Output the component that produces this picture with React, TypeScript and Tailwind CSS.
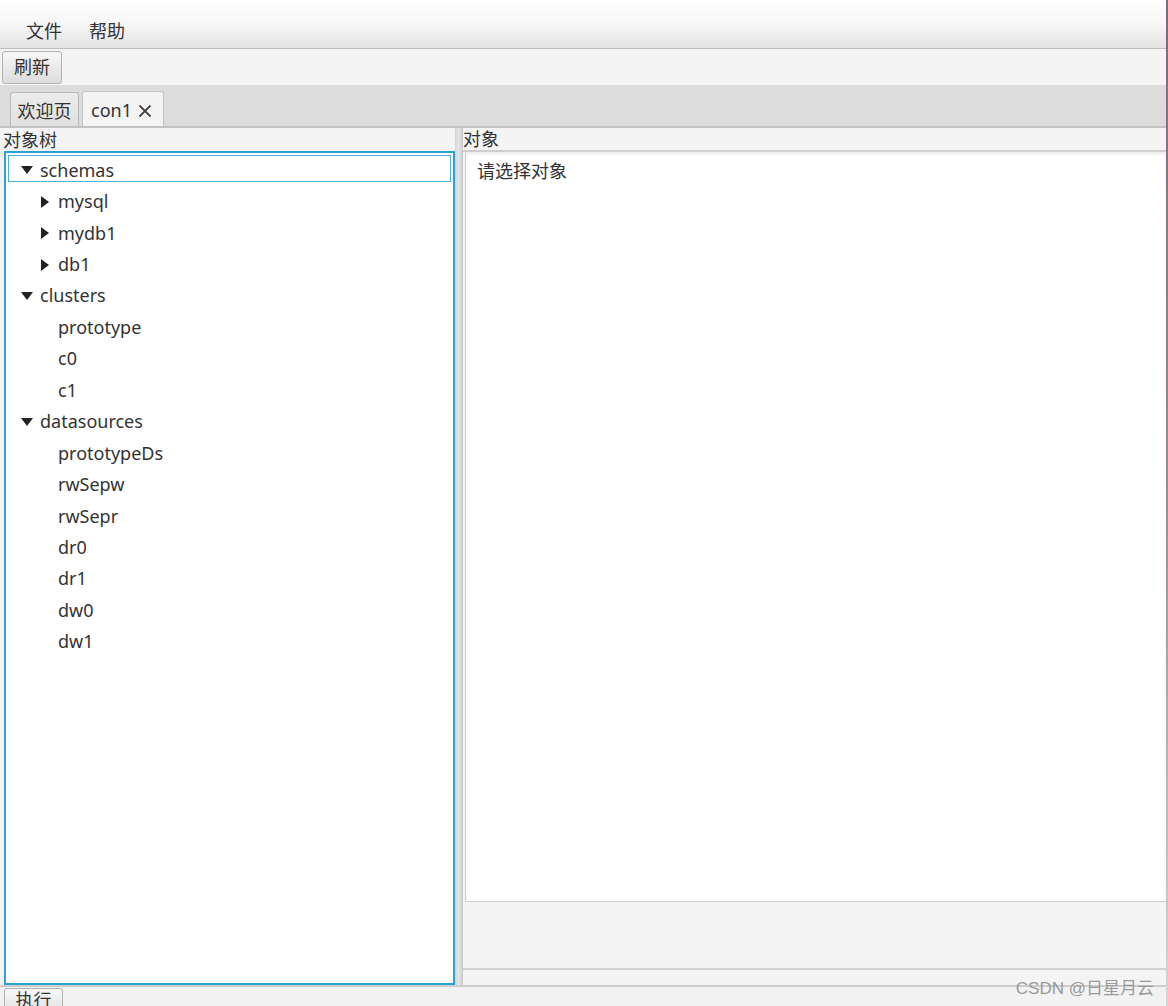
import React from "react";

const font = { fontFamily: '"Noto Sans", "Noto Sans CJK SC", sans-serif' };

type Node = { label: string; level: number; arrow?: "down" | "right"; selected?: boolean };

const nodes: Node[] = [
  { label: "schemas", level: 0, arrow: "down", selected: true },
  { label: "mysql", level: 1, arrow: "right" },
  { label: "mydb1", level: 1, arrow: "right" },
  { label: "db1", level: 1, arrow: "right" },
  { label: "clusters", level: 0, arrow: "down" },
  { label: "prototype", level: 1 },
  { label: "c0", level: 1 },
  { label: "c1", level: 1 },
  { label: "datasources", level: 0, arrow: "down" },
  { label: "prototypeDs", level: 1 },
  { label: "rwSepw", level: 1 },
  { label: "rwSepr", level: 1 },
  { label: "dr0", level: 1 },
  { label: "dr1", level: 1 },
  { label: "dw0", level: 1 },
  { label: "dw1", level: 1 },
];

function Arrow({ dir }: { dir: "down" | "right" }) {
  if (dir === "down") {
    return (
      <svg width="12" height="8" viewBox="0 0 12 8" className="block">
        <path d="M0 0 L12 0 L6 8 Z" fill="#222" />
      </svg>
    );
  }
  return (
    <svg width="8" height="12" viewBox="0 0 8 12" className="block">
      <path d="M0 0 L8 6 L0 12 Z" fill="#222" />
    </svg>
  );
}

function TreeRow({ n }: { n: Node }) {
  return (
    <div className="h-[31.45px] px-[2px] py-[2px]">
      <div
        className={
          "h-full flex items-center pt-[3px] border " +
          (n.selected ? "border-[#4fb0db]" : "border-transparent")
        }
      >
        {n.level === 0 ? (
          <>
            <div className="w-[31px] pl-[12px] flex items-center">
              <Arrow dir="down" />
            </div>
            <span className="text-[18px] text-[#333] leading-none pb-[1px]">{n.label}</span>
          </>
        ) : (
          <>
            <div className="w-[49px] pl-[32px] flex items-center">
              {n.arrow ? <Arrow dir="right" /> : null}
            </div>
            <span className="text-[18px] text-[#333] leading-none pb-[1px]">{n.label}</span>
          </>
        )}
      </div>
    </div>
  );
}

export default function App() {
  return (
    <div style={font} className="relative w-[1168px] h-[1006px] overflow-hidden bg-[#f4f4f4] flex text-[#333]">
      <div className="flex-1 flex flex-col min-w-0">
        {/* Menu bar */}
        <div className="h-[49px] shrink-0 bg-gradient-to-b from-white via-[#f6f6f6] to-[#e4e4e4] border-b border-[#bdbdbd] flex items-end pb-[5px] pl-[26px] gap-[27px]">
          <span className="text-[18px] leading-none pb-[3px]">文件</span>
          <span className="text-[18px] leading-none pb-[3px]">帮助</span>
        </div>
        {/* Toolbar */}
        <div className="h-[36px] shrink-0 bg-[#f4f4f4] flex items-center pl-[2px]">
          <div className="h-[33px] w-[60px] rounded-[3px] border border-[#b0b0b0] bg-gradient-to-b from-[#f8f8f8] to-[#dddddd] flex items-center justify-center">
            <span className="text-[18px] leading-none">刷新</span>
          </div>
        </div>
        {/* Tab header */}
        <div className="h-[43px] shrink-0 bg-[#dcdcdc] border-b-[2px] border-[#c2c2c2] flex items-end pl-[10px] gap-[3px]">
          <div className="h-[34px] w-[69px] rounded-t-[3px] border border-b-0 border-[#b8b8b8] bg-gradient-to-b from-[#ececec] to-[#e0e0e0] flex items-center justify-center pt-[3px]">
            <span className="text-[18px] leading-none">欢迎页</span>
          </div>
          <div className="h-[35px] w-[82px] rounded-t-[3px] border border-b-0 border-[#c4c4c4] bg-[#f4f4f4] flex items-center pl-[8px] gap-[6px] pt-[3px]">
            <span className="text-[18px] leading-none pb-[1px]">con1</span>
            <svg width="14" height="14" viewBox="0 0 14 14" className="block">
              <path d="M1.5 1.5 L12.5 12.5 M12.5 1.5 L1.5 12.5" stroke="#444" strokeWidth="1.8" />
            </svg>
          </div>
        </div>
        {/* Split pane */}
        <div className="flex-1 flex min-h-0">
          {/* Left */}
          <div className="w-[455px] shrink-0 flex flex-col">
            <div className="h-[23px] shrink-0 pl-[3px] flex items-center">
              <span className="text-[18px] leading-none">对象树</span>
            </div>
            <div className="flex-1 ml-[4px] border-2 border-[#2aa2d4] bg-white">
              {nodes.map((n) => (
                <TreeRow key={n.label} n={n} />
              ))}
            </div>
          </div>
          {/* Divider */}
          <div className="w-[7px] shrink-0 bg-gradient-to-r from-[#d4d4d4] via-[#e6e6e6] to-[#d0d0d0]" />
          {/* Right */}
          <div className="flex-1 flex flex-col border-l border-[#c8c8c8] min-w-0">
            <div className="h-[24px] shrink-0 flex items-center border-b-[2px] border-[#cfcfcf]">
              <span className="text-[18px] leading-none">对象</span>
            </div>
            <div className="h-[750px] shrink-0 ml-[2px] bg-white border-l border-b border-[#cfcfcf] shadow-[inset_0_2px_3px_rgba(0,0,0,0.08)] pl-[11px] pt-[8px]">
              <span className="text-[18px] leading-none">请选择对象</span>
            </div>
            <div className="h-[68px] shrink-0 bg-[#f4f4f4] border-b-[2px] border-[#d2d2d2]" />
            <div className="flex-1 bg-[#f4f4f4]" />
          </div>
        </div>
        {/* Bottom */}
        <div className="h-[21px] shrink-0 bg-[#f2f2f2] border-t-[2px] border-[#cccccc] pl-[4px] pt-[1px]">
          <div className="h-[30px] w-[59px] rounded-[3px] border border-[#b0b0b0] bg-gradient-to-b from-[#f8f8f8] to-[#dddddd] flex justify-center pt-[2px]">
            <span className="text-[18px] leading-none">执行</span>
          </div>
        </div>
      </div>
      <div className="w-[2px] shrink-0 bg-gradient-to-b from-[#7b6a7c] via-[#9a8c99] to-[#d8d4d8]" />
      <div className="absolute right-[14px] bottom-[9px] text-[17px] leading-none text-[#9a9a9a]" style={{ fontFamily: '"Liberation Sans", "Noto Sans CJK SC", sans-serif' }}>
        CSDN @日星月云
      </div>
    </div>
  );
}
